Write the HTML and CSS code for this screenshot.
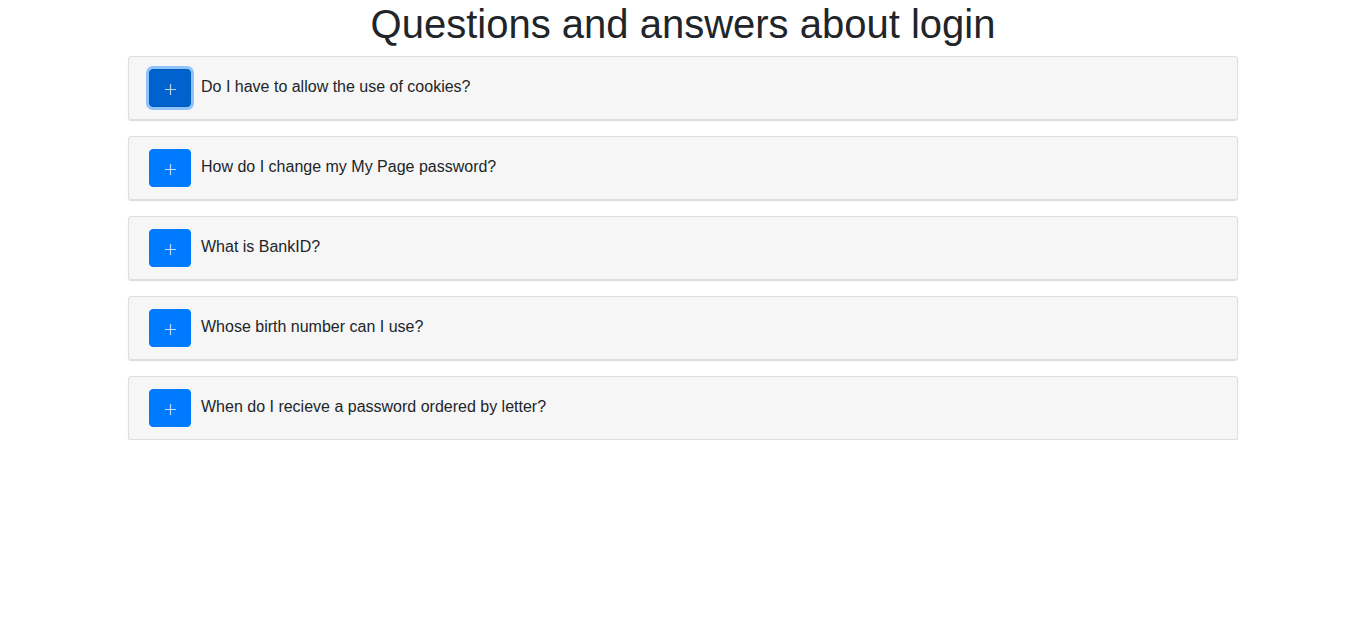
FILE: index.html
```html
<!DOCTYPE html>
<html lang="en">
<head>
<meta charset="utf-8">
<title>Questions and answers about login</title>
<link rel="stylesheet" href="styles.css">
</head>
<body>
<div class="container">
  <h1 class="title">Questions and answers about login</h1>
  <div class="faq">
    <div class="card">
      <button class="toggle is-focused" type="button" aria-label="Expand"><svg class="plus" width="11" height="11" viewBox="0 0 11 11"><path d="M5.5 0V11M0 5.5H11" stroke="currentColor" stroke-width="1.2"/></svg></button>
      <span class="question">Do I have to allow the use of cookies?</span>
    </div>
    <div class="card">
      <button class="toggle" type="button" aria-label="Expand"><svg class="plus" width="11" height="11" viewBox="0 0 11 11"><path d="M5.5 0V11M0 5.5H11" stroke="currentColor" stroke-width="1.2"/></svg></button>
      <span class="question">How do I change my My Page password?</span>
    </div>
    <div class="card">
      <button class="toggle" type="button" aria-label="Expand"><svg class="plus" width="11" height="11" viewBox="0 0 11 11"><path d="M5.5 0V11M0 5.5H11" stroke="currentColor" stroke-width="1.2"/></svg></button>
      <span class="question">What is BankID?</span>
    </div>
    <div class="card">
      <button class="toggle" type="button" aria-label="Expand"><svg class="plus" width="11" height="11" viewBox="0 0 11 11"><path d="M5.5 0V11M0 5.5H11" stroke="currentColor" stroke-width="1.2"/></svg></button>
      <span class="question">Whose birth number can I use?</span>
    </div>
    <div class="card">
      <button class="toggle" type="button" aria-label="Expand"><svg class="plus" width="11" height="11" viewBox="0 0 11 11"><path d="M5.5 0V11M0 5.5H11" stroke="currentColor" stroke-width="1.2"/></svg></button>
      <span class="question">When do I recieve a password ordered by letter?</span>
    </div>
  </div>
</div>
</body>
</html>
```

FILE: styles.css
```css
* { box-sizing: border-box; }
html, body { margin: 0; padding: 0; background: #fff; }
body {
  font-family: "Liberation Sans", Arial, sans-serif;
  font-size: 16px;
  line-height: 1.5;
  color: #212529;
}
.container {
  width: 1140px;
  margin: 0 auto;
  padding: 0 15px;
}
.title {
  margin: 0 0 8px;
  font-size: 40px;
  font-weight: 500;
  line-height: 1.2;
  text-align: center;
  color: #212529;
}
.faq {
  display: flex;
  flex-direction: column;
  gap: 16px;
}
.card {
  display: flex;
  align-items: center;
  padding: 12px 20px;
  background: #f6f6f6;
  border: 1px solid #dfdfdf;
  border-radius: 3px;
  box-shadow: 0 1px 1px rgba(0, 0, 0, 0.15);
}
.toggle {
  display: flex;
  align-items: center;
  justify-content: center;
  flex: none;
  width: 42px;
  height: 38px;
  padding: 3px 0 0;
  margin-right: 10px;
  border: 1px solid #007bff;
  border-radius: 4px;
  background: #007bff;
  color: rgba(255, 255, 255, 0.72);
  cursor: pointer;
}
.plus { display: block; }
.toggle.is-focused {
  background: #0062cc;
  border-color: #005cbf;
  box-shadow: 0 0 0 3px rgba(38, 143, 255, 0.5);
  outline: none;
}
.question {
  font-size: 16px;
  line-height: 24px;
  padding-bottom: 2px;
}
```
